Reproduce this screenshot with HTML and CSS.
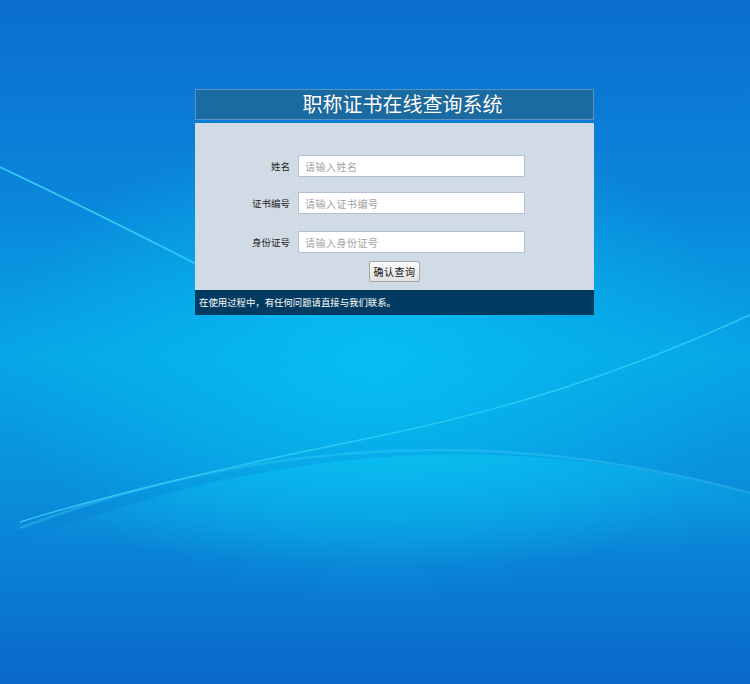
FILE: index.html
```html
<!DOCTYPE html>
<html lang="zh-CN">
<head>
  <meta charset="UTF-8">
  <title>职称证书在线查询系统</title>
  <link rel="stylesheet" href="styles.css">
</head>
<body>
  <svg class="backdrop" width="750" height="684" viewBox="0 0 750 684">
    <defs>
      <radialGradient id="band" cx="0.55" cy="0" r="0.75" fx="0.55" fy="0" gradientTransform="translate(0.55 0) scale(1 0.6) translate(-0.55 0)">
        <stop offset="0" stop-color="#0bc6f3" stop-opacity="0.6"/>
        <stop offset="1" stop-color="#0bc6f3" stop-opacity="0"/>
      </radialGradient>
    </defs>
    <path d="M-20,560 Q380,385 770,500 L770,700 L-20,700 Z" fill="url(#band)"/>
    <path d="M20,528 Q380,392 750,493" fill="none" stroke="#3fd2f6" stroke-width="2.5" stroke-opacity="0.35"/>
    <path d="M0,167 Q95,212 200,266" fill="none" stroke="#33cdf5" stroke-width="1.6"/>
    <path d="M750,315 C620,375 500,412 360,440 C220,468 90,500 20,522" fill="none" stroke="#33cff6" stroke-width="1.4" stroke-opacity="0.85"/>
  </svg>

  <div class="panel">
    <div class="panel-head">职称证书在线查询系统</div>
    <form class="panel-body">
      <div class="row">
        <label for="name">姓名</label>
        <input id="name" type="text" placeholder="请输入姓名">
      </div>
      <div class="row">
        <label for="cert">证书编号</label>
        <input id="cert" type="text" placeholder="请输入证书编号">
      </div>
      <div class="row">
        <label for="idno">身份证号</label>
        <input id="idno" type="text" placeholder="请输入身份证号">
      </div>
      <div class="actions">
        <button type="button">确认查询</button>
      </div>
    </form>
    <div class="panel-foot">在使用过程中，有任何问题请直接与我们联系。</div>
  </div>
</body>
</html>
```

FILE: styles.css
```css
html, body {
  margin: 0;
  height: 684px;
  overflow: hidden;
}
body {
  position: relative;
  font-family: "Noto Sans CJK SC", "Noto Sans", sans-serif;
  background:
    radial-gradient(ellipse 380px 240px at 375px 360px, #06bdf0 0%, rgba(6, 189, 240, 0) 100%),
    linear-gradient(180deg, #0b6fcf 0%, #0a86da 30%, #07a6e6 52%, #0a8ad9 75%, #0a68c9 100%);
}
.backdrop {
  position: absolute;
  left: 0;
  top: 0;
}
.panel {
  position: relative;
  width: 399px;
  margin: 89px 0 0 195px;
}
.panel-head {
  height: 29px;
  line-height: 28px;
  padding-left: 16px;
  text-align: center;
  font-size: 20px;
  color: #fff;
  background: #1b6ba3;
  border: 1px solid #5a93bf;
  text-shadow: 0 0 1px rgba(0, 0, 0, 0.3);
}
.panel-body {
  margin: 3px 0 0;
  padding: 32px 0 8px;
  background: #d1dbe5;
}
.row {
  display: grid;
  grid-template-columns: 95px 227px;
  column-gap: 8px;
  align-items: center;
  height: 22px;
  margin-bottom: 15px;
}
.row:nth-child(2),
.row:nth-child(3) {
  margin-bottom: 17px;
}
.row label {
  text-align: right;
  font-size: 9.5px;
  line-height: 14px;
  color: #222;
}
.row input {
  box-sizing: border-box;
  height: 22px;
  margin: 0;
  padding: 0 6px;
  border: 1px solid #b3c1d3;
  background: #fff;
  font-family: inherit;
  font-size: 10px;
  letter-spacing: 0.5px;
  outline: none;
}
.row input::placeholder {
  color: #a3a3a3;
}
.actions {
  display: flex;
  justify-content: center;
  height: 21px;
  margin-top: -9px;
}
.actions button {
  box-sizing: border-box;
  width: 51px;
  height: 21px;
  padding: 0;
  font-family: inherit;
  font-size: 10px;
  line-height: 19px;
  letter-spacing: 0.5px;
  color: #111;
  background: linear-gradient(#fbfbfb, #e2e2e2);
  border: 1px solid #a6a6a6;
  border-radius: 2px;
}
.panel-foot {
  height: 25px;
  line-height: 25px;
  padding-left: 4px;
  font-size: 9.4px;
  color: #fff;
  background: #023b61;
}
```
